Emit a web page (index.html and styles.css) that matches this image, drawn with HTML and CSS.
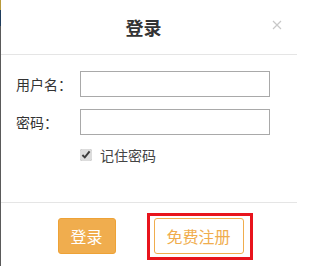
FILE: index.html
```html
<!DOCTYPE html>
<html lang="zh-CN">
<head>
<meta charset="utf-8">
<title>登录</title>
<link rel="stylesheet" href="styles.css">
</head>
<body>
<div class="edge"></div>
<div class="dialog">
  <div class="header">
    <div class="title">登录</div>
    <span class="close">
      <svg width="10" height="10" viewBox="0 0 10 10"><path d="M1 1L9 9M9 1L1 9" stroke="#c8c8c8" stroke-width="1.2" fill="none"/></svg>
    </span>
  </div>
  <div class="body">
    <div class="row">
      <label class="label">用户名：</label>
      <input class="field" type="text">
    </div>
    <div class="row">
      <label class="label">密码：</label>
      <input class="field" type="password">
    </div>
    <div class="remember">
      <input class="check" type="checkbox" checked>
      <span class="remember-text">记住密码</span>
    </div>
  </div>
  <div class="footer">
    <button class="btn btn-login">登录</button>
    <span class="reg-wrap">
      <button class="btn btn-reg">免费注册</button>
      <span class="highlight"></span>
    </span>
  </div>
</div>
</body>
</html>
```

FILE: styles.css
```css
html, body {
  margin: 0;
  padding: 0;
  background: #fff;
}
body {
  display: flex;
  width: 297px;
  height: 266px;
  overflow: hidden;
  font-family: "Noto Sans CJK SC", "Liberation Sans", sans-serif;
  color: #333;
}
.edge {
  width: 1px;
  flex: none;
  background: linear-gradient(to bottom, #b89a3a 0, #b89a3a 10px, #1f3d5c 10px, #1f3d5c 26px, #5a5a5a 26px, #5a5a5a 100%);
}
.dialog {
  flex: 1;
  display: flex;
  flex-direction: column;
}
.header {
  position: relative;
  height: 54px;
  border-bottom: 1px solid #e5e5e5;
}
.title {
  width: 285px;
  text-align: center;
  font-size: 18px;
  font-weight: bold;
  line-height: 54px;
  color: #333;
}
.close {
  position: absolute;
  left: 271px;
  top: 20px;
  width: 10px;
  height: 10px;
  display: flex;
}
.body {
  height: 147px;
  box-sizing: border-box;
  padding: 16px 0 0 15px;
}
.row {
  display: flex;
  align-items: center;
  margin-bottom: 12px;
}
.label {
  width: 64px;
  font-size: 14px;
  line-height: 26px;
  color: #333;
}
.field {
  width: 190px;
  height: 26px;
  box-sizing: border-box;
  margin: 0;
  border: 1px solid #a9a9a9;
  border-radius: 0;
  padding: 0 4px;
  outline: none;
}
.remember {
  display: flex;
  align-items: center;
  margin-left: 64px;
  margin-top: -2px;
  height: 20px;
}
.check {
  width: 12px;
  height: 12px;
  margin: 0 8px 0 0;
  accent-color: #dcdcdc;
}
.remember-text {
  font-size: 14px;
  color: #444;
}
.footer {
  flex: 1;
  border-top: 1px solid #e5e5e5;
  display: flex;
  justify-content: center;
  align-items: flex-start;
  gap: 38px;
  padding: 15px 0 0 3px;
}
.btn {
  height: 36px;
  box-sizing: border-box;
  margin: 0;
  padding: 0 12px;
  border-radius: 3px;
  font-family: "Noto Sans CJK SC", "Liberation Sans", sans-serif;
  font-size: 16px;
  cursor: pointer;
}
.btn-login {
  width: 58px;
  background: #f0ad4e;
  border: 1px solid #eea236;
  color: #fff;
}
.reg-wrap {
  position: relative;
  display: flex;
}
.btn-reg {
  width: 90px;
  background: #fff;
  border: 1px solid #f0ad4e;
  color: #f0ad4e;
}
.highlight {
  position: absolute;
  left: -7px;
  top: -5px;
  right: -9px;
  bottom: -6px;
  border: 3px solid #e8141c;
  pointer-events: none;
}
```
